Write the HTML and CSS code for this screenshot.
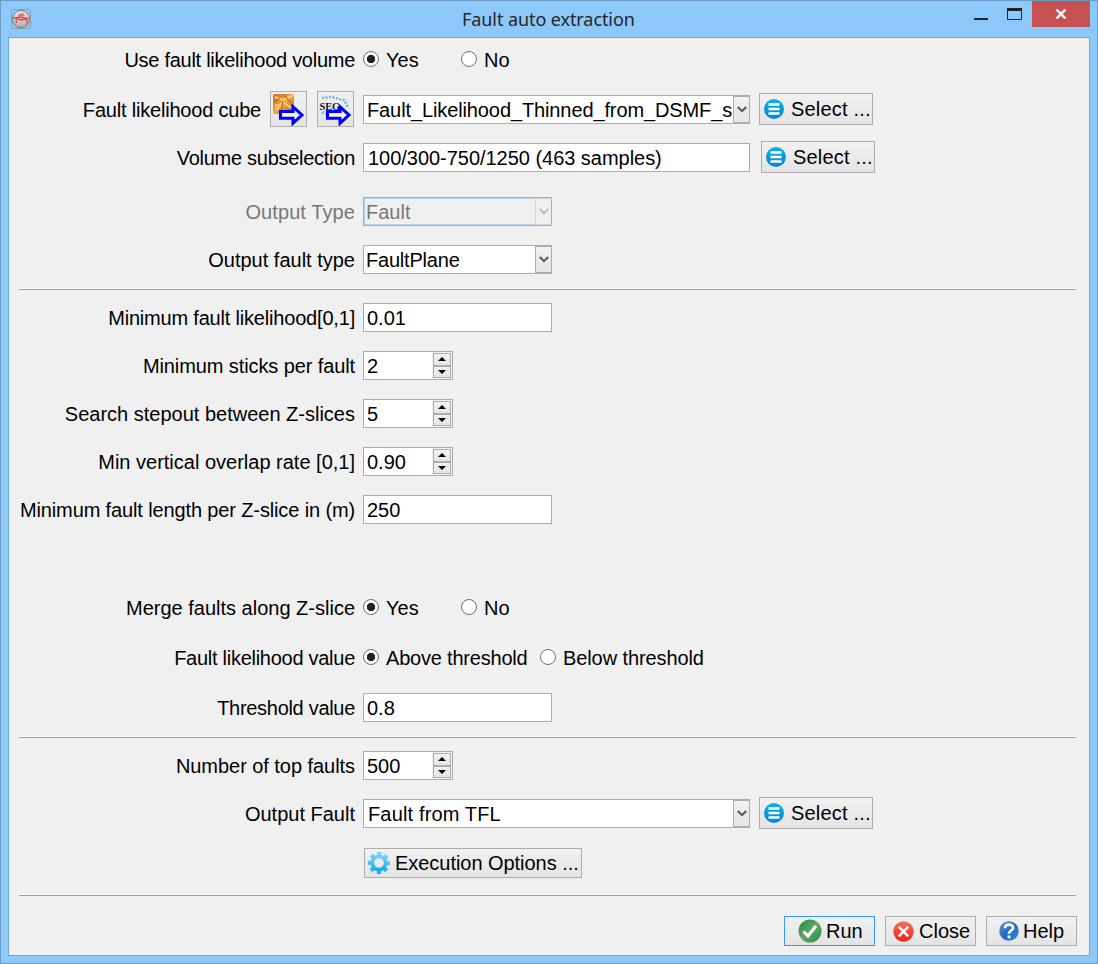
FILE: index.html
```html
<!DOCTYPE html>
<html lang="en">
<head>
<meta charset="utf-8">
<title>Fault auto extraction</title>
<link rel="stylesheet" href="styles.css">
</head>
<body>
<svg class="defs" width="0" height="0" aria-hidden="true">
  <defs>
    <linearGradient id="blue" x1="0" y1="0" x2="0" y2="1"><stop offset="0" stop-color="#0bb3e6"/><stop offset="1" stop-color="#0584cc"/></linearGradient>
    <linearGradient id="cyan" x1="0" y1="0" x2="0" y2="1"><stop offset="0" stop-color="#6fd0fa"/><stop offset="1" stop-color="#1caee6"/></linearGradient>
    <linearGradient id="green" x1="0" y1="0" x2="1" y2="1"><stop offset="0" stop-color="#1d8a35"/><stop offset=".5" stop-color="#62a86c"/><stop offset="1" stop-color="#1d9038"/></linearGradient>
    <linearGradient id="red" x1="0" y1="0" x2="0" y2="1"><stop offset="0" stop-color="#f4715f"/><stop offset="1" stop-color="#e3251d"/></linearGradient>
    <linearGradient id="help" x1="0" y1="0" x2="1" y2="1"><stop offset="0" stop-color="#5d9be0"/><stop offset=".5" stop-color="#2468bd"/><stop offset="1" stop-color="#2f8fe0"/></linearGradient>
    <linearGradient id="cube" x1="0" y1="0" x2="1" y2="1"><stop offset="0" stop-color="#c56b1c"/><stop offset=".5" stop-color="#f2a84a"/><stop offset="1" stop-color="#a94f16"/></linearGradient>
    <linearGradient id="ball" x1="0" y1="0" x2="0" y2="1"><stop offset="0" stop-color="#e8e8e8"/><stop offset="1" stop-color="#b0b0b0"/></linearGradient>
    <symbol id="list" viewBox="0 0 20 20"><circle cx="10" cy="10" r="10" fill="url(#blue)"/><path d="M4.500 5.500h11M4.500 10h11M4.500 14.500h11" stroke="#fff" stroke-width="2.400"/></symbol>
    <symbol id="arrow" viewBox="0 0 27 22"><path d="M2.500 7.500h12.500V2.800L24 11l-9 8.200v-5H2.500z" fill="#f4f4f4" stroke="#00f" stroke-width="3"/></symbol>
    <symbol id="chevron" viewBox="0 0 10 7"><path d="M.800 1L5 5.200 9.200 1" fill="none" stroke="currentColor" stroke-width="2"/></symbol>
    <symbol id="up" viewBox="0 0 8 4"><path d="M0 4l4-4 4 4z"/></symbol>
    <symbol id="down" viewBox="0 0 8 4"><path d="M0 0h8L4 4z"/></symbol>
  </defs>
</svg>
<div class="window">
  <header class="titlebar">
    <svg class="app-icon" viewBox="0 0 20 20"><rect x=".5" y=".5" width="19" height="19" rx="1" fill="none" stroke="#8d9eae"/><circle cx="10" cy="10" r="8.500" fill="url(#ball)" stroke="#777"/><path d="M2 8.500l3 .5 4-1 7 1.500 1.500 0M5 9l.5 5M15.500 9.500l.5 5M5.500 9l4 2 6-1" fill="none" stroke="#e84545" stroke-width="1.300"/><path d="M7 6l2-1.500h4L13.500 7l-6 1z" fill="#e87575"/></svg>
    <h1 class="title">Fault auto extraction</h1>
    <div class="controls">
      <svg class="minmax" viewBox="0 0 60 26"><path d="M4 18h14v2H4z" fill="#222"/><path d="M37.500 8.500h14v11h-14z" fill="none" stroke="#222"/><path d="M37 8h15v3H37z" fill="#222"/></svg>
      <div class="win-close"><svg viewBox="0 0 12 10" width="12" height="10"><path d="M1.500.500l9 9M10.500.500l-9 9" stroke="#fff" stroke-width="2.400"/></svg></div>
    </div>
  </header>
  <main class="client">
    <div class="row first"><div class="label l1">Use fault likelihood volume</div><div class="radio"><i class="dot on"></i><span>Yes</span></div><div class="radio second"><i class="dot"></i><span>No</span></div></div>
    <div class="row"><div class="label cube-label l2">Fault likelihood cube</div>
      <div class="tools">
        <div class="tool"><svg viewBox="0 0 35 34"><rect x="2" y="2" width="21" height="20" rx="2" fill="url(#cube)"/><path d="M4 5l8 3 9-4M5 17l7-7 8 6M4 13l7 1" stroke="#ffd070" stroke-width="2" fill="none"/><path d="M13 3l7 8M3 10l6-4M12 9l-2 10" stroke="#a3501a"/><use href="#arrow" x="7" y="12" width="27" height="22"/></svg></div>
        <div class="tool"><svg viewBox="0 0 35 34"><path d="M4 6l9-1 13 3 4 7M4 20l6 3 4 3" fill="none" stroke="#6db4dc" stroke-width="2.500" stroke-dasharray="2 1.500"/><text x="1.500" y="18" class="seg">SEG</text><use href="#arrow" x="7" y="12" width="27" height="22"/></svg></div>
      </div>
      <div class="combo wide"><span class="t1">Fault_Likelihood_Thinned_from_DSMF_s</span><i class="drop"><svg><use href="#chevron"/></svg></i></div>
      <div class="button select"><svg><use href="#list"/></svg><span>Select ...</span></div></div>
    <div class="row subselection"><div class="label l3">Volume subselection</div><div class="field wide editable"><span class="t2">100/300-750/1250 (463 samples)</span></div><div class="button select shifted"><svg><use href="#list"/></svg><span>Select ...</span></div></div>
    <div class="row"><div class="label muted l4">Output Type</div><div class="combo disabled"><span>Fault</span><i class="drop"><svg><use href="#chevron"/></svg></i></div></div>
    <div class="row tight"><div class="label l5">Output fault type</div><div class="combo"><span class="t7">FaultPlane</span><i class="drop"><svg><use href="#chevron"/></svg></i></div></div>
    <hr>
    <div class="row"><div class="label l6">Minimum fault likelihood[0,1]</div><div class="field"><span>0.01</span></div></div>
    <div class="row"><div class="label l7">Minimum sticks per fault</div><div class="spin"><span>2</span><div class="steps"><i><svg><use href="#up"/></svg></i><i><svg><use href="#down"/></svg></i></div></div></div>
    <div class="row"><div class="label l8">Search stepout between Z-slices</div><div class="spin"><span>5</span><div class="steps"><i><svg><use href="#up"/></svg></i><i><svg><use href="#down"/></svg></i></div></div></div>
    <div class="row"><div class="label l9">Min vertical overlap rate [0,1]</div><div class="spin"><span>0.90</span><div class="steps"><i><svg><use href="#up"/></svg></i><i><svg><use href="#down"/></svg></i></div></div></div>
    <div class="row section-end"><div class="label l10">Minimum fault length per Z-slice in (m)</div><div class="field"><span>250</span></div></div>
    <div class="row loose"><div class="label l11">Merge faults along Z-slice</div><div class="radio"><i class="dot on"></i><span>Yes</span></div><div class="radio second"><i class="dot"></i><span>No</span></div></div>
    <div class="row loose"><div class="label l12">Fault likelihood value</div><div class="radio above"><i class="dot on"></i><span class="t3">Above threshold</span></div><div class="radio"><i class="dot"></i><span class="t4">Below threshold</span></div></div>
    <div class="row tight"><div class="label l13">Threshold value</div><div class="field"><span>0.8</span></div></div>
    <hr>
    <div class="row"><div class="label l14">Number of top faults</div><div class="spin"><span>500</span><div class="steps"><i><svg><use href="#up"/></svg></i><i><svg><use href="#down"/></svg></i></div></div></div>
    <div class="row output"><div class="label l15">Output Fault</div><div class="combo wide editable"><span class="t5">Fault from TFL</span><i class="drop"><svg><use href="#chevron"/></svg></i></div><div class="button select"><svg><use href="#list"/></svg><span>Select ...</span></div></div>
    <div class="execution"><div class="button options"><svg viewBox="0 0 22 22"><circle cx="11" cy="11" r="9.300" fill="none" stroke="url(#cyan)" stroke-width="3.400" stroke-dasharray="4 3.304" stroke-dashoffset="2"/><circle cx="11" cy="11" r="6.700" fill="none" stroke="url(#cyan)" stroke-width="3.800"/></svg><span class="t6">Execution Options ...</span></div></div>
    <hr class="last">
    <footer class="actions">
      <div class="button action run"><svg viewBox="0 0 24 24"><circle cx="12" cy="12" r="11.500" fill="url(#green)"/><path d="M5.500 12.500l4.500 4.500 8-10" fill="none" stroke="#fff" stroke-width="3"/></svg><span>Run</span></div>
      <div class="button action close"><svg viewBox="0 0 22 22"><circle cx="11" cy="11" r="10.700" fill="url(#red)"/><path d="M6 6l10 10M16 6L6 16" stroke="#fff" stroke-width="2.600"/></svg><span>Close</span></div>
      <div class="button action help"><svg viewBox="0 0 22 22"><circle cx="11" cy="11" r="10.700" fill="url(#help)"/><path d="M6.500 8c.3-5.500 9-5 9-.5 0 3-4.500 3-4.500 6.500M11 16v3" fill="none" stroke="#fff" stroke-width="3"/></svg><span>Help</span></div>
    </footer>
  </main>
</div>
</body>
</html>
```
FILE: styles.css
```css
* { box-sizing: border-box; }
body { margin: 0; font: 20px/29px "Liberation Sans", Arial, sans-serif; color: #000; }
.defs { position: absolute; }
svg { display: block; flex: none; }
span, .label { white-space: pre; }
.window { width: 1098px; height: 964px; padding: 0 7px 7px; border: 1px solid #6c9bc8; background: #8dc8fb; display: flex; flex-direction: column; }
.titlebar { height: 36px; flex: none; display: flex; align-items: flex-start; }
.app-icon { width: 20px; height: 20px; margin: 8px 0 0 3px; }
.title { margin: 5px 0 0 431px; font: 18px/27px "Noto Sans", "Open Sans", sans-serif; letter-spacing: -.08px; color: #252525; white-space: pre; }
.controls { display: flex; margin-left: auto; }
.minmax { width: 60px; height: 26px; margin: -1px 2px 0 0; }
.win-close { width: 58px; height: 26px; padding-right: 1px; background: #c75050; display: flex; align-items: center; justify-content: center; }
.client { flex: 1; background: #f0f0f0; border: 1px solid #76a6d0; padding: 7px 13px 0 10px; }
.row { display: flex; align-items: center; height: 29px; margin-bottom: 19px; }
.row.first, .row.loose { margin-bottom: 21px; }
.row.subselection { margin-bottom: 25px; }
.row.tight { margin-bottom: 15px; }
.row.section-end { margin-bottom: 69px; }
.row.output { margin-bottom: 20px; }
.label { width: 336px; margin: 2px 8px 0 0; flex: none; display: flex; justify-content: flex-end; }
.cube-label { width: 242px; margin-right: 9px; }
.muted { color: #787878; }
.l1, .l3 { letter-spacing: -.27px; }
.l2 { letter-spacing: -.2px; }
.l4 { letter-spacing: .09px; }
.l6 { letter-spacing: -.19px; }
.l7 { letter-spacing: -.1px; }
.l10 { letter-spacing: -.13px; }
.l12 { letter-spacing: -.27px; }
.l13 { letter-spacing: -.3px; }
.l14 { letter-spacing: -.05px; }
.t1 { letter-spacing: -.11px; }
.t2 { letter-spacing: -.03px; }
.t3 { letter-spacing: -.2px; }
.t4 { letter-spacing: -.1px; }
.t5 { letter-spacing: .15px; }
.t6 { letter-spacing: -.04px; }
.t7 { letter-spacing: -.2px; }
.tools { display: flex; gap: 10px; margin: -1px 9px 0 0; }
.tool { width: 37px; height: 36px; border: 1px solid #adadad; background: linear-gradient(#f1f1f1, #e4e4e4); }
.tool svg { width: 35px; height: 34px; }
.seg { font: bold 10.300px "Liberation Serif", serif; fill: #111; }
.field, .combo, .spin { height: 29px; width: 189px; flex: none; border: 1px solid #abadb3; background: #fff; padding-left: 3px; line-height: 28px; }
.combo { display: flex; padding-left: 2px; }
.combo span { flex: 1; overflow: hidden; }
.wide { width: 387px; padding-left: 3px; }
.editable { padding-left: 4px; }
.drop { width: 17px; margin-right: -1px; border: 1px solid #adadad; background: linear-gradient(#f1f1f1, #e5e5e5); display: flex; align-items: center; justify-content: center; color: #555; }
.drop svg { width: 10px; height: 7px; }
.disabled { background: #f0f0f0; color: #787878; border-color: #adadad; box-shadow: inset 0 0 0 1px #b4d1ef; }
.disabled .drop { color: #bcbcbc; background: #f0f0f0; border-color: #d5d5d5 #adadad #d5d5d5 #d5d5d5; }
.spin { width: 90px; display: flex; }
.spin span { flex: 1; }
.steps { width: 20px; padding: 1px; background: #f0f0f0; display: flex; flex-direction: column; }
.steps i { flex: 1; border: 1px solid #adadad; background: linear-gradient(#f2f2f2, #e6e6e6); display: flex; align-items: center; justify-content: center; }
.steps svg { width: 8px; height: 4px; }
.radio { display: flex; align-items: center; width: 98px; }
.radio span { margin-top: 2px; }
.dot { width: 16px; height: 16px; flex: none; border: 1px solid #707070; border-radius: 50%; background: #fff; margin: -2px 7px 0 0; }
.dot.on { background: radial-gradient(circle, #222 0 3.8px, #fff 4.500px); }
.above { width: 177px; }
.button { border: 1px solid #adadad; background: linear-gradient(#f1f1f1, #e4e4e4); display: flex; align-items: center; flex: none; }
.select { width: 114px; height: 32px; margin: -1px 0 0 9px; padding-left: 4px; letter-spacing: .2px; }
.select svg { width: 20px; height: 20px; margin-right: 7px; }
.shifted { margin-left: 11px; }
hr { border: 0; height: 1px; margin: 0 0 13px; background: #a0a0a0; box-shadow: 0 -1px #fff; }
.execution { padding-left: 345px; margin-bottom: 17px; }
.options { width: 218px; height: 30px; padding-left: 3px; }
.options svg { width: 22px; height: 22px; margin-right: 5px; }
.last { margin-bottom: 20px; }
.actions { display: flex; justify-content: flex-end; gap: 10px; margin-right: -1px; }
.action { width: 91px; height: 30px; }
.run { border-color: #3399ff; padding-left: 13px; }
.run svg { width: 24px; height: 24px; margin-right: 4px; }
.close { padding-left: 7px; }
.close svg { width: 21px; height: 21px; margin-right: 5px; }
.help { padding-left: 12px; }
.help svg { width: 20px; height: 20px; margin-right: 4px; }
```
